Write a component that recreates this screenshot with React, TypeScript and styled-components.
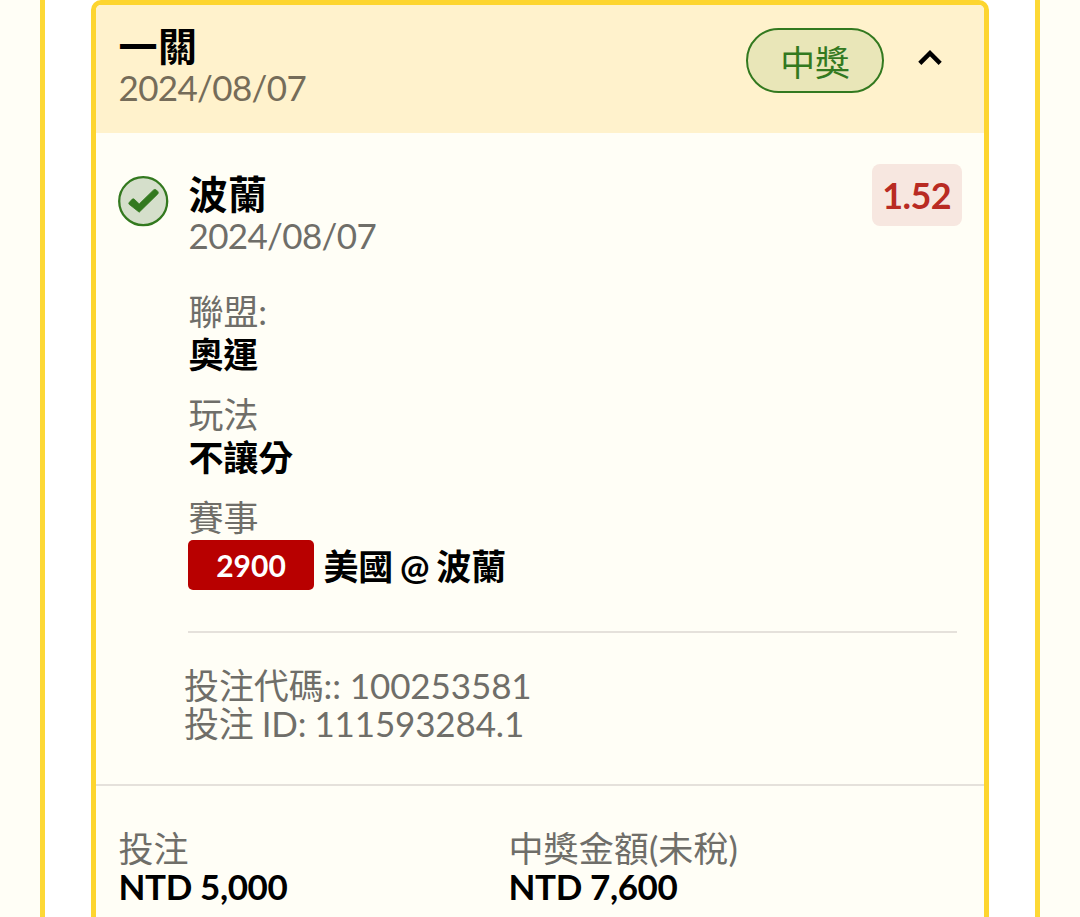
import React from "react";
import styled, { createGlobalStyle } from "styled-components";

const details = [
    { label: "聯盟:", value: "奧運" },
    { label: "玩法", value: "不讓分" },
]

const amounts = [
    { label: "投注", value: "NTD 5,000" },
    { label: "中獎金額(未稅)", value: "NTD 7,600" },
]

function CheckIcon() {
    return(
        <CheckSvg viewBox="0 0 51 51" fill="none">
            <circle cx="25.2" cy="25.2" r="24" fill="#D5DFCB" stroke="#33791F" strokeWidth="2.3" />
            <path d="M11.1 26.6 L14.3 23.1 Q15.2 22.5 16.1 23.1 L21.2 27.9 L35.6 13.9 Q36.9 12.9 38.3 13.9 L40 15.7 Q40.7 16.9 39.8 18 L21.2 36.2 L11.1 28.3 Q10.4 27.4 11.1 26.6 Z" fill="#33791F" stroke="#33791F" strokeWidth="0.8" />
        </CheckSvg>
    )
}

function ChevronIcon() {
    return(
        <ChevronSvg viewBox="0 0 24 16" fill="none">
            <path d="M1.8 13.4 L12 3.2 L22.2 13.4" stroke="#000000" strokeWidth="4.4" />
        </ChevronSvg>
    )
}

function TicketHeader() {
    return(
        <HeaderArea>
            <HeaderText>
                <Title>一關</Title>
                <HeaderDate>2024/08/07</HeaderDate>
            </HeaderText>
            <StatusBadge>中獎</StatusBadge>
            <ChevronIcon />
        </HeaderArea>
    )
}

function Selection() {
    return(
        <SelectionArea>
            <SelectionTop>
                <CheckIcon />
                <SelectionName>
                    <Title>波蘭</Title>
                    <DateText>2024/08/07</DateText>
                </SelectionName>
                <OddsBox>1.52</OddsBox>
            </SelectionTop>
            <DetailList>
                {details.map((data) => (
                    <Detail key={data.label}>
                        <DetailLabel>{data.label}</DetailLabel>
                        <DetailValue>{data.value}</DetailValue>
                    </Detail>
                ))}
                <Detail>
                    <DetailLabel>賽事</DetailLabel>
                    <MatchRow>
                        <MatchCode>2900</MatchCode>
                        <MatchName>美國 @ 波蘭</MatchName>
                    </MatchRow>
                </Detail>
            </DetailList>
            <CodeArea>
                <Muted>投注代碼:: 100253581</Muted>
                <BetId>投注 ID: 111593284.1</BetId>
            </CodeArea>
        </SelectionArea>
    )
}

export default function App() {
    return(
        <>
            <GlobalStyle />
            <Page>
                <Frame>
                    <Ticket>
                        <TicketHeader />
                        <Selection />
                        <AmountArea>
                            {amounts.map((data) => (
                                <div key={data.label}>
                                    <AmountLabel>{data.label}</AmountLabel>
                                    <Amount>{data.value}</Amount>
                                </div>
                            ))}
                        </AmountArea>
                    </Ticket>
                </Frame>
            </Page>
        </>
    )
}

const GlobalStyle = createGlobalStyle`
  * {
    box-sizing: border-box;
  }
  body {
    margin: 0;
    overflow: hidden;
    background-color: #FFFEF6;
    font-family: Lato, "Noto Sans CJK TC", sans-serif;
    color: #000000;
  }
`

const Page = styled.div`
  height: 917px;
  padding: 0 40px;
  overflow: hidden;
`

const Frame = styled.div`
  height: 960px;
  padding: 0 46px;
  border: solid #FDD835;
  border-width: 0 5px;
  background-color: #FFFFFF;
`

const Ticket = styled.div`
  height: 960px;
  border: 5px solid #FDD52F;
  border-radius: 10px;
  background-color: #FFFEF6;
  overflow: hidden;
`

const HeaderArea = styled.div`
  display: flex;
  align-items: flex-start;
  height: 128px;
  padding: 21px 42.5px 0 22.5px;
  background-color: #FFF2CC;
`

const HeaderText = styled.div`
  flex: 1;
`

const Title = styled.div`
  font-size: 39px;
  font-weight: 700;
  line-height: 41px;
  letter-spacing: 0.5px;
`

const Muted = styled.div`
  font-size: 35px;
  line-height: 38px;
  letter-spacing: -0.1px;
  color: #6F6E69;
  white-space: nowrap;
`

const DateText = styled(Muted)`
  line-height: 40px;
  letter-spacing: -0.65px;
`

const HeaderDate = styled(DateText)`
  color: #756C59;
`

const BetId = styled(Muted)`
  letter-spacing: -0.15px;
  word-spacing: -0.8px;
`

const StatusBadge = styled.div`
  width: 138px;
  height: 65px;
  margin: 2px 33.5px 0 0;
  border: 2.5px solid #33791F;
  border-radius: 33px;
  background-color: #E9E6B8;
  color: #33791F;
  font-size: 34.8px;
  line-height: 65px;
  text-align: center;
`

const ChevronSvg = styled.svg`
  width: 24px;
  height: 16px;
  margin-top: 24px;
`

const SelectionArea = styled.div`
  height: 653px;
  border-bottom: 2px solid #E5E1DB;
`

const SelectionTop = styled.div`
  display: flex;
  align-items: flex-start;
  height: 156px;
  padding: 31px 22.5px 0 22px;
`

const CheckSvg = styled.svg`
  width: 51px;
  height: 51px;
  margin-top: 12px;
`

const SelectionName = styled.div`
  flex: 1;
  padding: 10px 0 0 19.5px;
`

const OddsBox = styled.div`
  width: 89.5px;
  height: 62px;
  border-radius: 8px;
  background-color: #F7E7E0;
  color: #B92B23;
  font-size: 36px;
  font-weight: 700;
  line-height: 63px;
  letter-spacing: -0.6px;
  text-align: center;
`

const DetailList = styled.div`
  height: 344px;
  margin: 0 27px 0 92px;
  border-bottom: 2px solid #E5E1DB;
`

const Detail = styled.div`
  height: 103px;
  padding-left: 0.5px;
`

const DetailLabel = styled(Muted)`
  line-height: 44px;
`

const DetailValue = styled.div`
  font-size: 35px;
  font-weight: 700;
  line-height: 42px;
  letter-spacing: -0.15px;
`

const MatchRow = styled.div`
  display: flex;
  align-items: center;
  gap: 9.5px;
  margin: 1px 0 0 -0.5px;
`

const MatchCode = styled.div`
  width: 126px;
  height: 50px;
  border-radius: 5px;
  background-color: #B80000;
  color: #FFFFFF;
  font-size: 30px;
  font-weight: 700;
  line-height: 51px;
  text-align: center;
`

const MatchName = styled(DetailValue)`
  padding-top: 2px;
  word-spacing: -1.5px;
  white-space: nowrap;
`

const CodeArea = styled.div`
  padding: 33px 0 0 88px;
`

const AmountArea = styled.div`
  display: grid;
  grid-template-columns: 390px 1fr;
  padding: 43px 0 0 22.5px;
`

const AmountLabel = styled(Muted)`
  letter-spacing: 0.1px;
`

const Amount = styled.div`
  font-size: 35px;
  font-weight: 700;
  line-height: 38px;
  letter-spacing: -0.4px;
`
